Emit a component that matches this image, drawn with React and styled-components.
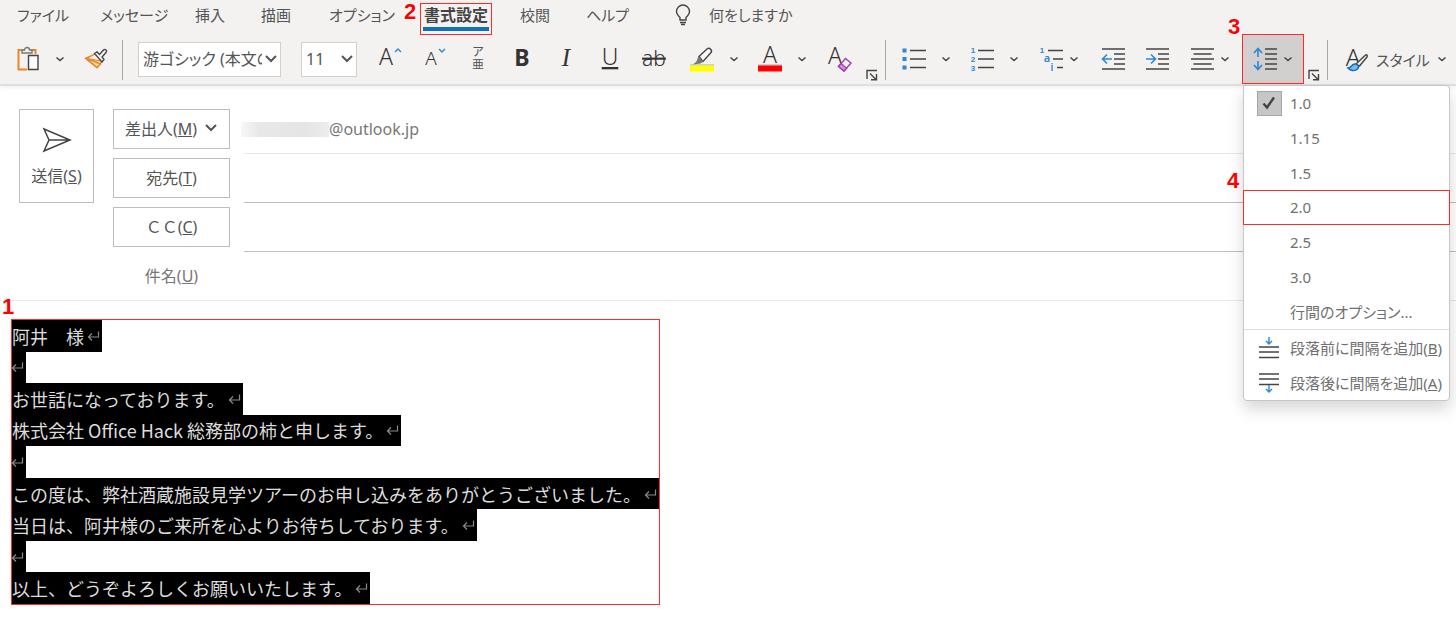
import styled, { createGlobalStyle, css } from "styled-components"

const uiFont = `"Noto Sans", "Noto Sans CJK JP", sans-serif`
const bodyFont = `"Noto Sans CJK JP", sans-serif`

const GlobalStyle = createGlobalStyle`
  * {
    box-sizing: border-box;
  }

  body {
    margin: 0;
    background: #fff;
    color: #555;
    font-family: ${uiFont};
    font-size: 15px;
    font-feature-settings: "palt";
    overflow-x: hidden;
  }

  button, select, input {
    font: inherit;
    font-feature-settings: "palt";
    color: inherit;
  }

  svg {
    flex: none;
    overflow: visible;
  }
`

const Header = styled.header`
  position: relative;
  z-index: 1;
  background: #f3f2f1;
  border-bottom: 2px solid #e0dfde;
  box-shadow: 0 1px 5px rgba(0, 0, 0, 0.08);
`

const TabList = styled.nav`
  display: grid;
  grid-template-columns: 83px 95px 66px 68px 91px 100px 66px 88px auto;
  justify-content: start;
  align-items: start;
  height: 34px;
  padding: 3px 0 0 17px;
`

const Tab = styled.button`
  position: relative;
  justify-self: start;
  padding: 0;
  border: 0;
  background: none;
  line-height: 24px;
  white-space: nowrap;
`

const ActiveTab = styled(Tab)`
  height: 32px;
  padding: 0 2px 3px;
  border: 1px solid #ff2a2a;
  font-size: 16px;
  font-weight: 700;
  line-height: 23px;
  color: #444;
`

const ActiveLabel = styled.span`
  display: block;
  padding: 0 1px;
  border-bottom: 4px solid #106ebe;
`

const TellMe = styled(Tab)`
  display: flex;
  align-items: center;
  gap: 17px;
`

const Callout = styled.span`
  position: absolute;
  top: ${props => props.$top}px;
  left: ${props => props.$left}px;
  font-family: "Liberation Sans", Arial, sans-serif;
  font-size: 22px;
  font-weight: 700;
  line-height: 22px;
  color: #f00;
  text-shadow: 0 0 2px #fff, 1px 1px 0 #fff, -1px -1px 0 #fff;
`

const Toolbar = styled.div`
  display: flex;
  align-items: stretch;
  height: 50px;
`

const Group = styled.div`
  display: flex;
  align-items: center;
  flex: none;
  padding: 0 ${props => props.$right || 4}px 0 ${props => props.$left || 6}px;
`

const Separator = styled.div`
  flex: none;
  width: 1px;
  height: 40px;
  margin-top: 6px;
  background: #a8a8a8;
`

const Split = styled.div`
  display: flex;
  flex: none;
  margin-left: ${props => props.$space || 0}px;
`

const Tool = styled.button`
  display: flex;
  align-items: center;
  justify-content: center;
  flex: none;
  width: ${props => props.$width || 44}px;
  height: 50px;
  padding: 0;
  border: 0;
  background: none;
`

const Launcher = styled(Tool)`
  align-items: flex-end;
  width: 19px;
  padding-bottom: 3px;
`

const StyleTool = styled(Tool)`
  gap: 7px;
  width: auto;
  padding: 0 4px 0 11px;
  white-space: nowrap;
`

const SelectBox = styled.label`
  display: grid;
  align-items: center;
  width: ${props => props.$width}px;
  height: 35px;
  margin-right: ${props => props.$space}px;
  border: 1px solid #d2d0ce;
  background: #fff;

  select, svg {
    grid-area: 1 / 1;
  }

  select {
    width: 100%;
    height: 33px;
    padding: 0 18px 0 4px;
    border: 0;
    background: none;
    appearance: none;
    font-size: 16px;
  }

  svg {
    justify-self: end;
    margin-right: 2px;
    pointer-events: none;
  }
`

const SpacingAnchor = styled.div`
  position: relative;
  margin-left: 7px;
`

const SpacingButton = styled(Tool)`
  gap: 6px;
  width: 62px;
  border: 1px solid #ff2a2a;
  background: #d2d0ce;
`

const Menu = styled.div`
  position: absolute;
  top: 51px;
  left: 1px;
  width: 207px;
  border: 1px solid #c8c6c4;
  border-radius: 0 4px 4px 4px;
  background: #fff;
  box-shadow: 0 8px 16px rgba(0, 0, 0, 0.16);
`

const MenuSection = styled.div`
  display: grid;
  grid-auto-rows: 1fr;
  height: ${props => props.$height}px;

  & + & {
    border-top: 1px solid #e1dfdd;
  }
`

const MenuItem = styled.button`
  position: relative;
  display: grid;
  grid-template-columns: 26px auto;
  gap: 8px;
  align-items: center;
  justify-content: start;
  justify-items: center;
  padding: 0 0 0 12px;
  border: 0;
  background: none;
  font-size: 15px;
  line-height: 20px;
  text-align: left;
  white-space: nowrap;
  color: #707070;

  ${props => props.$marked && css`
    margin: 0 -1px;
    border: 1px solid #ff2a2a;
  `}
`

const CheckBox = styled.span`
  display: flex;
  align-items: center;
  justify-content: center;
  width: 25px;
  height: 25px;
  border: 1px solid #a6a6a6;
  background: #c6c6c6;
`

const Compose = styled.section`
  display: grid;
  grid-template-columns: 75px 1fr;
  gap: 19px;
  padding: 19px 0 0 19px;
  border-bottom: 1px solid #e8e8e8;
  font-size: 16px;
`

const outlined = css`
  border: 1px solid #bdbdbd;
  background: #fff;
  padding: 0 0 2px;
`

const SendButton = styled.button`
  ${outlined}
  display: flex;
  flex-direction: column;
  align-items: center;
  justify-content: center;
  gap: 12px;
  height: 94px;
  margin-top: 4px;
  padding: 2px 0 0;
  line-height: 22px;
`

const Row = styled.div`
  display: grid;
  grid-template-columns: 117px 1fr;
  gap: 14px;
  height: 49px;

  &:last-child {
    height: 48px;
  }
`

const RowButton = styled.button`
  ${outlined}
  display: flex;
  align-items: center;
  justify-content: center;
  gap: 7px;
  height: 40px;
  margin-top: 4px;
  font-feature-settings: normal;
`

const RowLabel = styled.label`
  align-self: center;
  padding-bottom: 3px;
  text-align: center;
  color: #777;
`

const Field = styled.div`
  display: flex;
  align-items: center;
  border-bottom: ${props => props.$line ? `1px solid ${props.$line}` : "0"};
  color: #777;

  input {
    width: 100%;
    height: 40px;
    border: 0;
    outline: 0;
    background: none;
  }
`

const HiddenName = styled.span`
  width: 88px;
  height: 15px;
  margin-left: -3px;
  background: linear-gradient(90deg, #f8f8f8, #e8e8e8 20%, #e5e5e5 75%, #ededed);
`

const Editor = styled.article`
  position: relative;
  display: grid;
  grid-auto-rows: 1fr;
  justify-items: start;
  width: fit-content;
  height: 286px;
  margin: 18px 0 12px 11px;
  border: 1px solid #ff2a2a;
  font-family: ${bodyFont};
  font-feature-settings: normal;
  font-size: 18px;
  line-height: 30px;
  color: #ddd;
`

const Line = styled.p`
  display: flex;
  align-items: center;
  margin: 0;
  background: #000;
  white-space: pre;

  svg {
    margin-left: ${props => props.$empty ? 0 : 4}px;
  }
`

const Stroke = ({ size = 24, width = size, children, color = "#444", weight = 1.4 }) => (
  <svg width={width} height={size} viewBox={`0 0 ${width} ${size}`} fill="none" stroke={color} strokeWidth={weight} aria-hidden="true">
    {children}
  </svg>
)

const Chevron = ({ big }) => big ? (
  <Stroke size={14} weight={2} color="#555"><path d="M2 4l5 5 5-5" /></Stroke>
) : (
  <Stroke size={10} weight={1.5}><path d="M1.5 3.5l3.5 3 3.5-3" /></Stroke>
)

const Glyph = ({ x = 12, y = 21, size = 23, children, ...rest }) => (
  <text x={x} y={y} fontSize={size} textAnchor="middle" fill="#333" stroke="none" fontFamily="Noto Sans, Noto Sans CJK JP" {...rest}>
    {children}
  </text>
)

const PasteIcon = () => (
  <Stroke size={26} width={24}>
    <path d="M8 4H2.500v19.500H11M15 4h4.500V8" stroke="#e8862a" strokeWidth="2" />
    <path d="M6 7V4h2.500a2.500 2.500 0 0 1 5 0H16v3z" fill="#f3f2f1" stroke="#777" />
    <path d="M12.500 9.500h9.500v14h-9.500z" fill="#fafafa" />
  </Stroke>
)

const BrushIcon = () => (
  <Stroke size={24}>
    <path d="M1.500 11.500L11 7l7 7.500-5 6z" fill="#fbd9a5" stroke="#e8862a" />
    <path d="M3 12l5.500 1.500 8 3.500-3.500 3.500z" fill="#fbd9a5" stroke="#e8862a" />
    <path d="M3 11.500L11 7l6.500 7z" fill="#f3f2f1" stroke="#e8862a" strokeWidth="1" />
    <path d="M10.500 6.500l2.500-1.500 2.500 2.500 4-4.500a1.700 1.700 0 0 1 2.500 2.500L18 10l2 2.500-2 2.500z" fill="#f8f8f8" />
  </Stroke>
)

const BulbIcon = () => (
  <Stroke size={22} width={18}>
    <path d="M6 16v-2.500C4 11.500 2.500 10 2.500 7.500a6.500 6.500 0 0 1 13 0c0 2.500-1.500 4-3.500 6V16zM6 18.500h6M7 20.500h4" />
  </Stroke>
)

const GrowIcon = () => (
  <Stroke size={28} width={26}>
    <Glyph x={9} y={20} size={23} fontWeight="300">A</Glyph>
    <path d="M18 7l3-3 3 3" stroke="#2b88d8" />
  </Stroke>
)

const ShrinkIcon = () => (
  <Stroke size={28} width={24}>
    <Glyph x={9} y={20} size={19} fontWeight="300">A</Glyph>
    <path d="M17 4l3 3 3-3" stroke="#2b88d8" />
  </Stroke>
)

const RubyIcon = () => (
  <Stroke size={28} width={16}>
    <Glyph x={8} y={11} size={12} fill="#555">ア</Glyph>
    <Glyph x={8} y={24} size={12} fill="#555">亜</Glyph>
  </Stroke>
)

const LetterIcon = ({ children, ...rest }) => (
  <Stroke size={28} width={30}>
    <Glyph x={15} {...rest}>{children}</Glyph>
  </Stroke>
)

const HighlightIcon = () => (
  <Stroke size={28} width={26}>
    <path d="M1 20h24" stroke="#aaa" strokeWidth="1" />
    <path d="M1 20.500h24v6H1z" fill="#ff0" stroke="none" />
    <path d="M10 11.500L18 4a2.700 2.700 0 0 1 3.800 3.800L14 16.500z" fill="#fafafa" />
    <path d="M9.500 11l5 5.500-3 2-7.500 1 3.500-3z" fill="#777" stroke="none" />
  </Stroke>
)

const FontColorIcon = () => (
  <Stroke size={28} width={26}>
    <Glyph x={13} y={18} size={23} fontWeight="300">A</Glyph>
    <path d="M1 20h24" stroke="#aaa" strokeWidth="1" />
    <path d="M1 20.500h24v6H1z" fill="#f00" stroke="none" />
  </Stroke>
)

const ClearIcon = () => (
  <Stroke size={28} width={26}>
    <Glyph x={8} y={19} size={23} fontWeight="300">A</Glyph>
    <path d="M11.500 21.500l7-8 5.500 4.500-7 8z" fill="#f3f2f1" stroke="#a33db0" />
    <path d="M11.500 21.500l2.500-3 5.500 4.800-2.500 2.700z" fill="#cf9bd6" stroke="#a33db0" />
  </Stroke>
)

const LauncherIcon = () => (
  <Stroke size={12}>
    <path d="M1 10V1.500h10M4 4.500l6 6M10.500 5v5.800H5" />
  </Stroke>
)

const BulletsIcon = () => (
  <Stroke size={24}>
    <path d="M8 3.500h16M8 12h16M8 20.500h16" />
    <path d="M.5 1.500h4v4h-4zM.5 10h4v4h-4zM.5 18.500h4v4h-4z" fill="#2b88d8" stroke="none" />
  </Stroke>
)

const NumbersIcon = () => (
  <Stroke size={26} width={24}>
    <path d="M8 4.500h16M8 13h16M8 21.500h16" />
    {["1", "2", "3"].map((n, i) => (
      <Glyph key={n} x={3} y={7 + i * 9} size={8} fill="#2b88d8" fontFamily="Liberation Sans" fontWeight="700">{n}</Glyph>
    ))}
  </Stroke>
)

const OutlineIcon = () => (
  <Stroke size={26} width={24}>
    <path d="M9 4.500h15M14 13h10M18 21.500h6" />
    <Glyph x={3} y={7} size={8} fill="#2b88d8" fontFamily="Liberation Sans" fontWeight="700">1</Glyph>
    <Glyph x={8} y={16} size={11} fill="#2b88d8" fontWeight="600">a</Glyph>
    <Glyph x={13} y={25} size={10} fill="#2b88d8" fontWeight="600">i</Glyph>
  </Stroke>
)

const IndentIcon = ({ out }) => (
  <Stroke size={24}>
    <path d="M1 2h23M13 7h11M13 12h11M13 17h11M1 22h23" />
    <path d={out ? "M11 12H2M6 7.500L1.500 12 6 16.500" : "M1 12h9M6 7.500l4.500 4.500L6 16.500"} stroke="#2b88d8" strokeWidth="1.600" />
  </Stroke>
)

const AlignIcon = () => (
  <Stroke size={24}>
    <path d="M1 2h23M3.500 7h18M1 12h23M3.500 17h18M1 22h23" />
  </Stroke>
)

const SpacingIcon = () => (
  <Stroke size={24}>
    <path d="M12 2h12M12 7h12M12 12h12M12 17h12M12 22h12" />
    <path d="M5 10V2M1 6l4-4.500L9 6M5 14v8M1 18l4 4.500L9 18" stroke="#2b88d8" strokeWidth="1.600" />
  </Stroke>
)

const StylesIcon = () => (
  <Stroke size={28} width={24}>
    <Glyph x={8} y={21} size={24} fontWeight="300">A</Glyph>
    <path d="M11 19L20 10.500c1.500-1.500 3 0 2 1.500L14.500 21z" fill="#f3f2f1" />
    <path d="M3 23c4 0 3-4 7-4 3 0 4.500 3 2.500 5C10 26.500 5.500 26 3 23z" fill="#7db8ea" stroke="#106ebe" />
  </Stroke>
)

const SendIcon = () => (
  <Stroke size={26} width={30} weight={1.5}>
    <path d="M2 2l26 11L2 24l5-11zM7 13h21" />
  </Stroke>
)

const CheckIcon = () => (
  <Stroke size={16} weight={2.4}>
    <path d="M2.500 8.500l3.500 4 7-10" />
  </Stroke>
)

const SpaceIcon = ({ after }) => (
  <Stroke size={24} width={22}>
    <path d={after ? "M1 3h20M1 8h20M1 13.500h20" : "M1 11h20M1 16h20M1 21.500h20"} />
    <path d={after ? "M11 14v7M8 18l3 3 3-3" : "M11 1v7M8 5l3 3 3-3"} stroke="#2b88d8" />
  </Stroke>
)

const ReturnIcon = () => (
  <Stroke size={14} width={14} color="#8a8a8a" weight={1.2}>
    <path d="M10.500 2.500v5.500H.5M4 4.500L.5 8 4 11.500" />
  </Stroke>
)

const spacings = ["1.0", "1.15", "1.5", "2.0", "2.5", "3.0"]

const lines = [
  "阿井　様",
  "",
  "お世話になっております。",
  "株式会社 Office Hack 総務部の柿と申します。",
  "",
  "この度は、弊社酒蔵施設見学ツアーのお申し込みをありがとうございました。",
  "当日は、阿井様のご来所を心よりお待ちしております。",
  "",
  "以上、どうぞよろしくお願いいたします。",
]

const SplitTool = ({ label, icon, width, space, chevronWidth = 20 }) => (
  <Split $space={space}>
    <Tool $width={width} aria-label={label}>{icon}</Tool>
    <Tool $width={chevronWidth} aria-label={`${label} メニュー`}><Chevron /></Tool>
  </Split>
)

const SpacingMenu = () => (
  <Menu role="menu">
    <MenuSection $height={243}>
      {spacings.map(value => (
        <MenuItem key={value} role="menuitem" $marked={value === "2.0"}>
          {value === "1.0" ? <CheckBox><CheckIcon /></CheckBox> : <span />}
          {value}
          {value === "2.0" && <Callout $top={-21} $left={-17}>4</Callout>}
        </MenuItem>
      ))}
      <MenuItem role="menuitem"><span />行間のオプション...</MenuItem>
    </MenuSection>
    <MenuSection $height={71}>
      <MenuItem role="menuitem"><SpaceIcon /><span>段落前に間隔を追加(<u>B</u>)</span></MenuItem>
      <MenuItem role="menuitem"><SpaceIcon after /><span>段落後に間隔を追加(<u>A</u>)</span></MenuItem>
    </MenuSection>
  </Menu>
)

const Ribbon = () => (
  <Header>
    <TabList>
      <Tab>ファイル</Tab>
      <Tab>メッセージ</Tab>
      <Tab>挿入</Tab>
      <Tab>描画</Tab>
      <Tab>オプション</Tab>
      <ActiveTab>
        <Callout $top={-3} $left={-17}>2</Callout>
        <ActiveLabel>書式設定</ActiveLabel>
      </ActiveTab>
      <Tab>校閲</Tab>
      <Tab>ヘルプ</Tab>
      <TellMe><BulbIcon />何をしますか</TellMe>
    </TabList>

    <Toolbar>
      <Group $left={12} $right={6}>
        <SplitTool label="貼り付け" icon={<PasteIcon />} width={32} chevronWidth={32} />
        <Tool $width={40} aria-label="書式のコピー"><BrushIcon /></Tool>
      </Group>
      <Separator />
      <Group $left={15} $right={4}>
        <SelectBox $width={143} $space={20}>
          <select aria-label="フォント">
            <option>游ゴシック (本文のフォント)</option>
          </select>
          <Chevron big />
        </SelectBox>
        <SelectBox $width={56} $space={11}>
          <select aria-label="フォント サイズ">
            <option>11</option>
          </select>
          <Chevron big />
        </SelectBox>
        <Tool aria-label="フォント サイズの拡大"><GrowIcon /></Tool>
        <Tool aria-label="フォント サイズの縮小"><ShrinkIcon /></Tool>
        <Tool aria-label="ルビ"><RubyIcon /></Tool>
        <Tool aria-label="太字"><LetterIcon fontWeight="700">B</LetterIcon></Tool>
        <Tool aria-label="斜体"><LetterIcon fontFamily="Liberation Serif" fontStyle="italic" size={25}>I</LetterIcon></Tool>
        <Tool aria-label="下線"><LetterIcon y={20} size={23} fontWeight="300" textDecoration="underline">U</LetterIcon></Tool>
        <Tool aria-label="取り消し線"><LetterIcon y={21} size={21} fontWeight="300" textDecoration="line-through">ab</LetterIcon></Tool>
        <SplitTool label="蛍光ペンの色" icon={<HighlightIcon />} space={4} />
        <SplitTool label="フォントの色" icon={<FontColorIcon />} space={4} />
        <Split $space={6}>
          <Tool aria-label="書式のクリア"><ClearIcon /></Tool>
          <Launcher aria-label="フォントの設定"><LauncherIcon /></Launcher>
        </Split>
      </Group>
      <Separator />
      <Group>
        <SplitTool label="箇条書き" icon={<BulletsIcon />} />
        <SplitTool label="段落番号" icon={<NumbersIcon />} space={4} />
        <SplitTool label="アウトライン" icon={<OutlineIcon />} width={26} space={14} />
        <Split $space={7}>
          <Tool aria-label="インデントを減らす"><IndentIcon out /></Tool>
          <Tool aria-label="インデントを増やす"><IndentIcon /></Tool>
        </Split>
        <SplitTool label="配置" icon={<AlignIcon />} width={26} space={10} />
        <SpacingAnchor>
          <SpacingButton aria-label="行と段落の間隔">
            <SpacingIcon />
            <Chevron />
          </SpacingButton>
          <Callout $top={-18} $left={-14}>3</Callout>
          <SpacingMenu />
        </SpacingAnchor>
        <Launcher aria-label="段落の設定"><LauncherIcon /></Launcher>
      </Group>
      <Separator />
      <Group>
        <StyleTool><StylesIcon />スタイル<Chevron /></StyleTool>
      </Group>
    </Toolbar>
  </Header>
)

const App = () => (
  <>
    <GlobalStyle />
    <Ribbon />
    <main>
      <Compose>
        <SendButton>
          <SendIcon />
          <span>送信(<u>S</u>)</span>
        </SendButton>
        <div>
          <Row>
            <RowButton><span>差出人(<u>M</u>)</span><Chevron big /></RowButton>
            <Field $line="#e8e8e8"><HiddenName />@outlook.jp</Field>
          </Row>
          <Row>
            <RowButton><span>宛先(<u>T</u>)</span></RowButton>
            <Field $line="#bdbdbd"><input aria-label="宛先" /></Field>
          </Row>
          <Row>
            <RowButton><span>ＣＣ(<u>C</u>)</span></RowButton>
            <Field $line="#bdbdbd"><input aria-label="CC" /></Field>
          </Row>
          <Row>
            <RowLabel htmlFor="subject">件名(<u>U</u>)</RowLabel>
            <Field><input id="subject" /></Field>
          </Row>
        </div>
      </Compose>

      <Editor>
        {lines.map((line, i) => (
          <Line key={i} $empty={!line}>{line}<ReturnIcon /></Line>
        ))}
        <Callout $top={-24} $left={-10}>1</Callout>
      </Editor>
    </main>
  </>
)

export default App
